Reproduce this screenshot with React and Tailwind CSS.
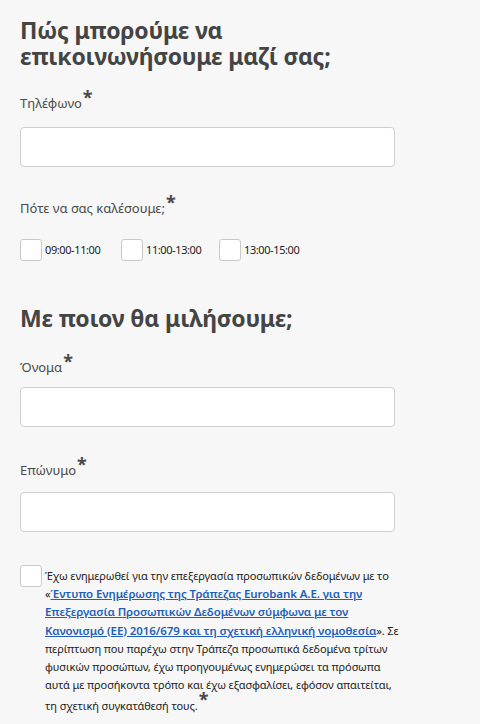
const Star = () => (
  <span className="relative -top-[4px] ml-[1px] text-[18px] font-bold leading-none text-[#4a4a4a]">*</span>
);

const Label = ({ children }) => (
  <label className="block text-[13px] leading-5 text-[#4a4a4a]">
    {children}
    <Star />
  </label>
);

const TextInput = () => (
  <input
    type="text"
    className="block h-10 w-[375px] rounded-[4px] border border-[#cfcfcf] bg-white px-3 text-sm"
  />
);

const Box = () => (
  <span className="block h-[22px] w-[22px] shrink-0 rounded-[3px] border border-[#c9c9c9] bg-white" />
);

const slots = ["09:00-11:00", "11:00-13:00", "13:00-15:00"];

export default function App() {
  return (
    <div className="min-h-[724px] bg-[#f7f7f7] px-5 pt-[17px] font-['Noto_Sans',sans-serif] text-[#444]">
      <h2 className="text-[23px] font-bold leading-[26px] tracking-[-0.2px] text-[#444]">
        Πώς μπορούμε να
        <br />
        επικοινωνήσουμε μαζί σας;
      </h2>

      <div className="mt-[23px]">
        <Label>Τηλέφωνο</Label>
        <div className="mt-[14px]">
          <TextInput />
        </div>
      </div>

      <div className="mt-[30px]">
        <Label>Πότε να σας καλέσουμε;</Label>
        <div className="mt-[21px] flex items-center">
          {slots.map((s, i) => (
            <label
              key={s}
              className={
                "flex items-center gap-[3px] text-[11px] tracking-[-0.4px] text-[#222] " +
                (i === 0 ? "w-[101px]" : i === 1 ? "w-[98px]" : "")
              }
            >
              <Box />
              {s}
            </label>
          ))}
        </div>
      </div>

      <h2 className="mt-[44px] text-[23px] font-bold leading-[26px] tracking-[-0.2px] text-[#444]">
        Με ποιον θα μιλήσουμε;
      </h2>

      <div className="mt-[25px]">
        <Label>Όνομα</Label>
        <div className="mt-[10px]">
          <TextInput />
        </div>
      </div>

      <div className="mt-[32px]">
        <Label>Επώνυμο</Label>
        <div className="mt-[12px]">
          <TextInput />
        </div>
      </div>

      <div className="mt-[33px] flex items-start gap-[3px] pb-4">
        <Box />
        <p className="mt-[2px] w-[370px] whitespace-nowrap text-[11px] leading-[18.2px] tracking-[-0.1px] text-[#222]">
          Έχω ενημερωθεί για την επεξεργασία προσωπικών δεδομένων με το
          <br />«
          <a href="#" className="text-[11.5px] font-semibold tracking-[-0.1px] text-[#1f5fb8] underline">
            Έντυπο Ενημέρωσης της Τράπεζας Eurobank A.E. για την
            <br />
            Επεξεργασία Προσωπικών Δεδομένων σύμφωνα με τον
            <br />
            Κανονισμό (ΕΕ) 2016/679 και τη σχετική ελληνική νομοθεσία
          </a>
          ». Σε
          <br />
          περίπτωση που παρέχω στην Τράπεζα προσωπικά δεδομένα τρίτων
          <br />
          φυσικών προσώπων, έχω προηγουμένως ενημερώσει τα πρόσωπα
          <br />
          αυτά με προσήκοντα τρόπο και έχω εξασφαλίσει, εφόσον απαιτείται,
          <br />
          τη σχετική συγκατάθεσή τους.
          <Star />
        </p>
      </div>
    </div>
  );
}
